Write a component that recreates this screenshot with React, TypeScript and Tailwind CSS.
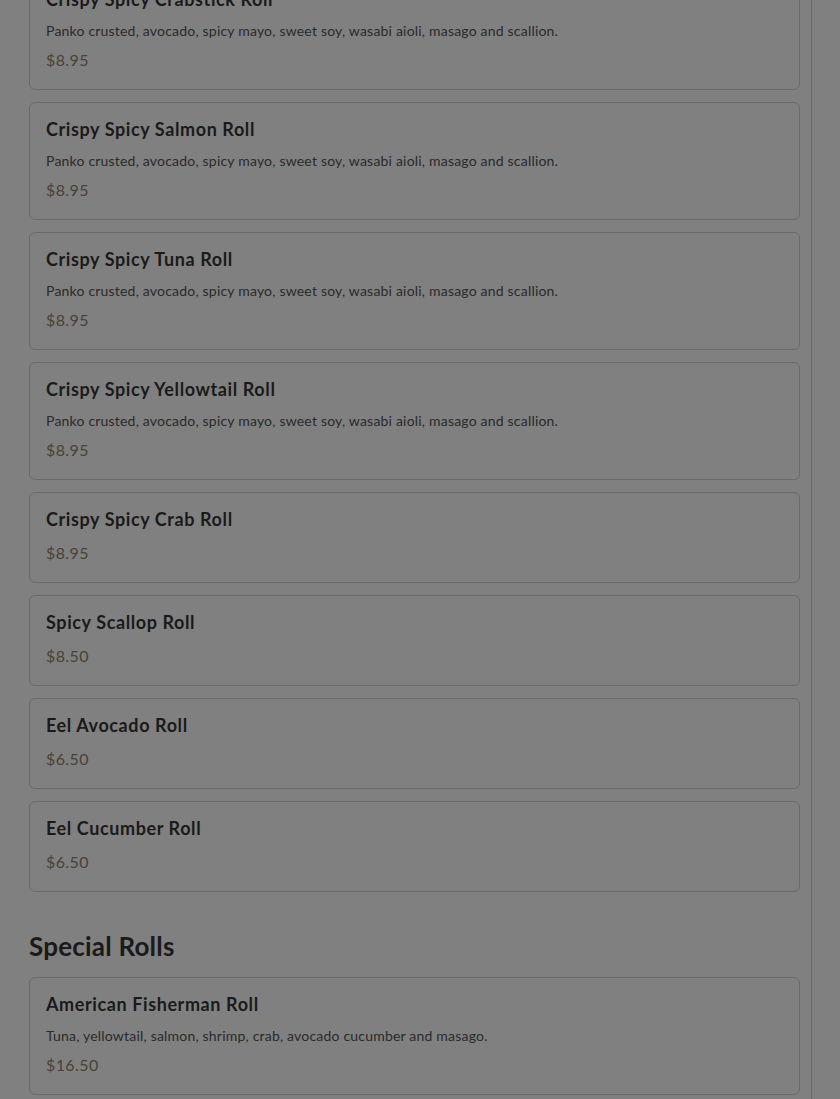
import React from "react";

type Item = { name: string; desc?: string; price: string };

const rolls: Item[] = [
  { name: "Crispy Spicy Crabstick Roll", desc: "Panko crusted, avocado, spicy mayo, sweet soy, wasabi aioli, masago and scallion.", price: "$8.95" },
  { name: "Crispy Spicy Salmon Roll", desc: "Panko crusted, avocado, spicy mayo, sweet soy, wasabi aioli, masago and scallion.", price: "$8.95" },
  { name: "Crispy Spicy Tuna Roll", desc: "Panko crusted, avocado, spicy mayo, sweet soy, wasabi aioli, masago and scallion.", price: "$8.95" },
  { name: "Crispy Spicy Yellowtail Roll", desc: "Panko crusted, avocado, spicy mayo, sweet soy, wasabi aioli, masago and scallion.", price: "$8.95" },
  { name: "Crispy Spicy Crab Roll", price: "$8.95" },
  { name: "Spicy Scallop Roll", price: "$8.50" },
  { name: "Eel Avocado Roll", price: "$6.50" },
  { name: "Eel Cucumber Roll", price: "$6.50" },
];

const special: Item[] = [
  { name: "American Fisherman Roll", desc: "Tuna, yellowtail, salmon, shrimp, crab, avocado cucumber and masago.", price: "$16.50" },
  { name: "Dragon Roll", desc: "Shrimp tempura, cucumber, topped with eel and avocado.", price: "$15.50" },
];

function Card({ item }: { item: Item }) {
  return (
    <div className="rounded-md border border-[#6a6a6a] bg-[#808080] px-4 pt-4 pb-[17px]">
      <div className="text-[18px] leading-[20px] font-bold tracking-[0.6px] text-[#1a1a1a] mb-[12px]">{item.name}</div>
      {item.desc && (
        <div className="text-[14px] leading-[20px] tracking-[0.2px] text-[#2a2a2a] mb-[7px]">{item.desc}</div>
      )}
      <div className="text-[16px] leading-[24px] tracking-[0.4px] text-[#4a4234]">{item.price}</div>
    </div>
  );
}

export default function App() {
  return (
    <div
      className="h-[1099px] overflow-hidden bg-[#808080] flex"
      style={{ fontFamily: "Lato, 'Noto Sans', sans-serif" }}
    >
      <div className="w-[812px] shrink-0 border-r border-[#6a6a6a] pl-[29px] pr-[11px]">
        <div className="-mt-[28px] flex flex-col gap-[12px]">
          {rolls.map((r) => (
            <Card key={r.name} item={r} />
          ))}
        </div>
        <h2 className="mt-[38px] mb-[15px] text-[26px] leading-[32px] font-bold tracking-[0.2px] text-[#1a1a1a]">Special Rolls</h2>
        <div className="flex flex-col gap-[12px]">
          {special.map((r) => (
            <Card key={r.name} item={r} />
          ))}
        </div>
      </div>
      <div className="flex-1" />
    </div>
  );
}
